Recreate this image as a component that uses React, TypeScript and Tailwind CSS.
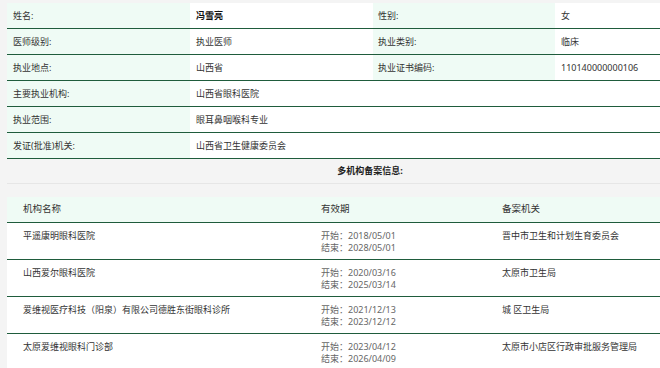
import React from 'react';

const rows1 = [
  { k: '姓名:', v: '冯雪亮', k2: '性别:', v2: '女', bold: true },
  { k: '医师级别:', v: '执业医师', k2: '执业类别:', v2: '临床' },
  { k: '执业地点:', v: '山西省', k2: '执业证书编码:', v2: '110140000000106' },
];

const rows2 = [
  { k: '主要执业机构:', v: '山西省眼科医院' },
  { k: '执业范围:', v: '眼耳鼻咽喉科专业' },
  { k: '发证(批准)机关:', v: '山西省卫生健康委员会' },
];

const orgs = [
  { name: '平遥康明眼科医院', start: '2018/05/01', end: '2028/05/01', org: '晋中市卫生和计划生育委员会' },
  { name: '山西爱尔眼科医院', start: '2020/03/16', end: '2025/03/14', org: '太原市卫生局' },
  { name: '爱维视医疗科技（阳泉）有限公司德胜东街眼科诊所', start: '2021/12/13', end: '2023/12/12', org: '城 区卫生局' },
  { name: '太原爱维视眼科门诊部', start: '2023/04/12', end: '2026/04/09', org: '太原市小店区行政审批服务管理局' },
];

const font = { fontFamily: '"Noto Sans", "Noto Sans CJK SC", sans-serif' };

const App = () => {
  return (
    <div className="w-full h-[368px] overflow-hidden bg-[#f4f4f4] text-[9px] text-[#333]" style={font}>
      <div className="pt-[3px] pl-[7px] w-[733px]">
        {/* basic info */}
        {rows1.map((r) => (
          <div key={r.k} className="flex h-[26px] border-b border-[#1f5c3c]">
            <div className="w-[183px] bg-[#effbf5] pl-[6px] flex items-center">{r.k}</div>
            <div className={`w-[183px] bg-white pl-[6px] flex items-center ${r.bold ? 'font-bold text-[#111]' : ''}`}>{r.v}</div>
            <div className="w-[182px] bg-[#effbf5] pl-[5px] flex items-center">{r.k2}</div>
            <div className="flex-1 bg-white pl-[6px] flex items-center">{r.v2}</div>
          </div>
        ))}
        {rows2.map((r) => (
          <div key={r.k} className="flex h-[26px] border-b border-[#1f5c3c]">
            <div className="w-[183px] bg-[#effbf5] pl-[6px] flex items-center">{r.k}</div>
            <div className="flex-1 bg-white pl-[6px] flex items-center">{r.v}</div>
          </div>
        ))}

        <div className="h-[25px] border-b border-[#e6e6e6] flex items-center justify-center font-bold text-[#222]">
          多机构备案信息:
        </div>

        {/* org table */}
        <div className="mt-[13px]">
          <div className="flex h-[26px] bg-[#effbf5] border-b border-[#1f5c3c] text-[9.5px]">
            <div className="w-[298px] pl-[16px] flex items-center">机构名称</div>
            <div className="w-[181px] pl-[16px] flex items-center">有效期</div>
            <div className="flex-1 pl-[16px] flex items-center">备案机关</div>
          </div>
          {orgs.map((o) => (
            <div key={o.name} className="flex h-[37px] bg-white border-b border-[#1f5c3c]">
              <div className="w-[298px] pl-[16px] pt-[7px] leading-[12px]">{o.name}</div>
              <div className="w-[181px] pl-[16px] pt-[7px] leading-[12px] text-[#666]">
                <div>开始：{o.start}</div>
                <div>结束：{o.end}</div>
              </div>
              <div className="flex-1 pl-[16px] pt-[7px] leading-[12px]">{o.org}</div>
            </div>
          ))}
        </div>
      </div>
    </div>
  );
};

export default App;
